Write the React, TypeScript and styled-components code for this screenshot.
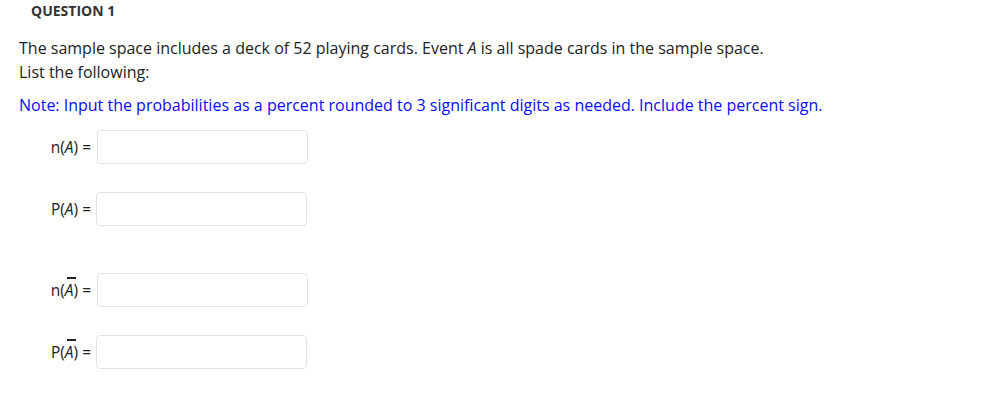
import React from "react";
import styled, { createGlobalStyle } from "styled-components";

const Global = createGlobalStyle`
  html, body { margin: 0; padding: 0; background: #fff; }
  body { font-family: "Open Sans", "Noto Sans", sans-serif; color: #222; }
`;

const Page = styled.div`
  width: 985px;
  height: 402px;
  box-sizing: border-box;
  padding: 1px 0 0 0;
`;

const Title = styled.h3`
  margin: 0 0 0 31px;
  font-size: 14px;
  font-weight: 700;
  color: #333;
  line-height: 20px;
`;

const Body = styled.div`
  padding: 15px 0 0 19px;
`;

const Para = styled.p`
  margin: 0;
  font-size: 16px;
  line-height: 24px;
  color: #222;
`;

const Note = styled.p`
  margin: 9px 0 0 0;
  font-size: 16px;
  line-height: 24px;
  color: #0a0aff;
`;

const Rows = styled.div`
  display: flex;
  flex-direction: column;
  margin-top: 13px;
`;

const Row = styled.div<{ $gap: number }>`
  display: flex;
  align-items: center;
  margin-top: ${(p) => p.$gap}px;
  &:first-child { margin-top: 0; }
`;

const Label = styled.span`
  width: 72px;
  text-align: right;
  font-size: 15.5px;
  color: #222;
  padding-right: 6px;
  white-space: nowrap;
`;

const Over = styled.span`
  font-style: italic;
  display: inline-block;
  position: relative;
  &::before {
    content: "";
    position: absolute;
    left: 2px;
    width: 9px;
    top: -2px;
    height: 2px;
    background: #222;
  }
`;

const Input = styled.input<{ $shift: number }>`
  box-sizing: border-box;
  width: 211px;
  height: 34px;
  border: 1px solid #e2e2e2;
  border-radius: 4px;
  background: #fff;
  margin-left: ${(p) => p.$shift}px;
  outline: none;
`;

export default function App() {
  return (
    <>
      <Global />
      <Page>
        <Title>QUESTION 1</Title>
        <Body>
          <Para>
            The sample space includes a deck of 52 playing cards. Event <i>A</i> is all spade cards in the sample space.
          </Para>
          <Para>List the following:</Para>
          <Note>
            Note: Input the probabilities as a percent rounded to 3 significant digits as needed. Include the percent sign.
          </Note>
          <Rows>
            <Row $gap={0}>
              <Label>
                n(<i>A</i>) =
              </Label>
              <Input $shift={0} />
            </Row>
            <Row $gap={28}>
              <Label>
                P(<i>A</i>) =
              </Label>
              <Input $shift={-1} />
            </Row>
            <Row $gap={47}>
              <Label>
                n(<Over>A</Over>) =
              </Label>
              <Input $shift={0} />
            </Row>
            <Row $gap={28}>
              <Label>
                P(<Over>A</Over>) =
              </Label>
              <Input $shift={-1} />
            </Row>
          </Rows>
        </Body>
      </Page>
    </>
  );
}
